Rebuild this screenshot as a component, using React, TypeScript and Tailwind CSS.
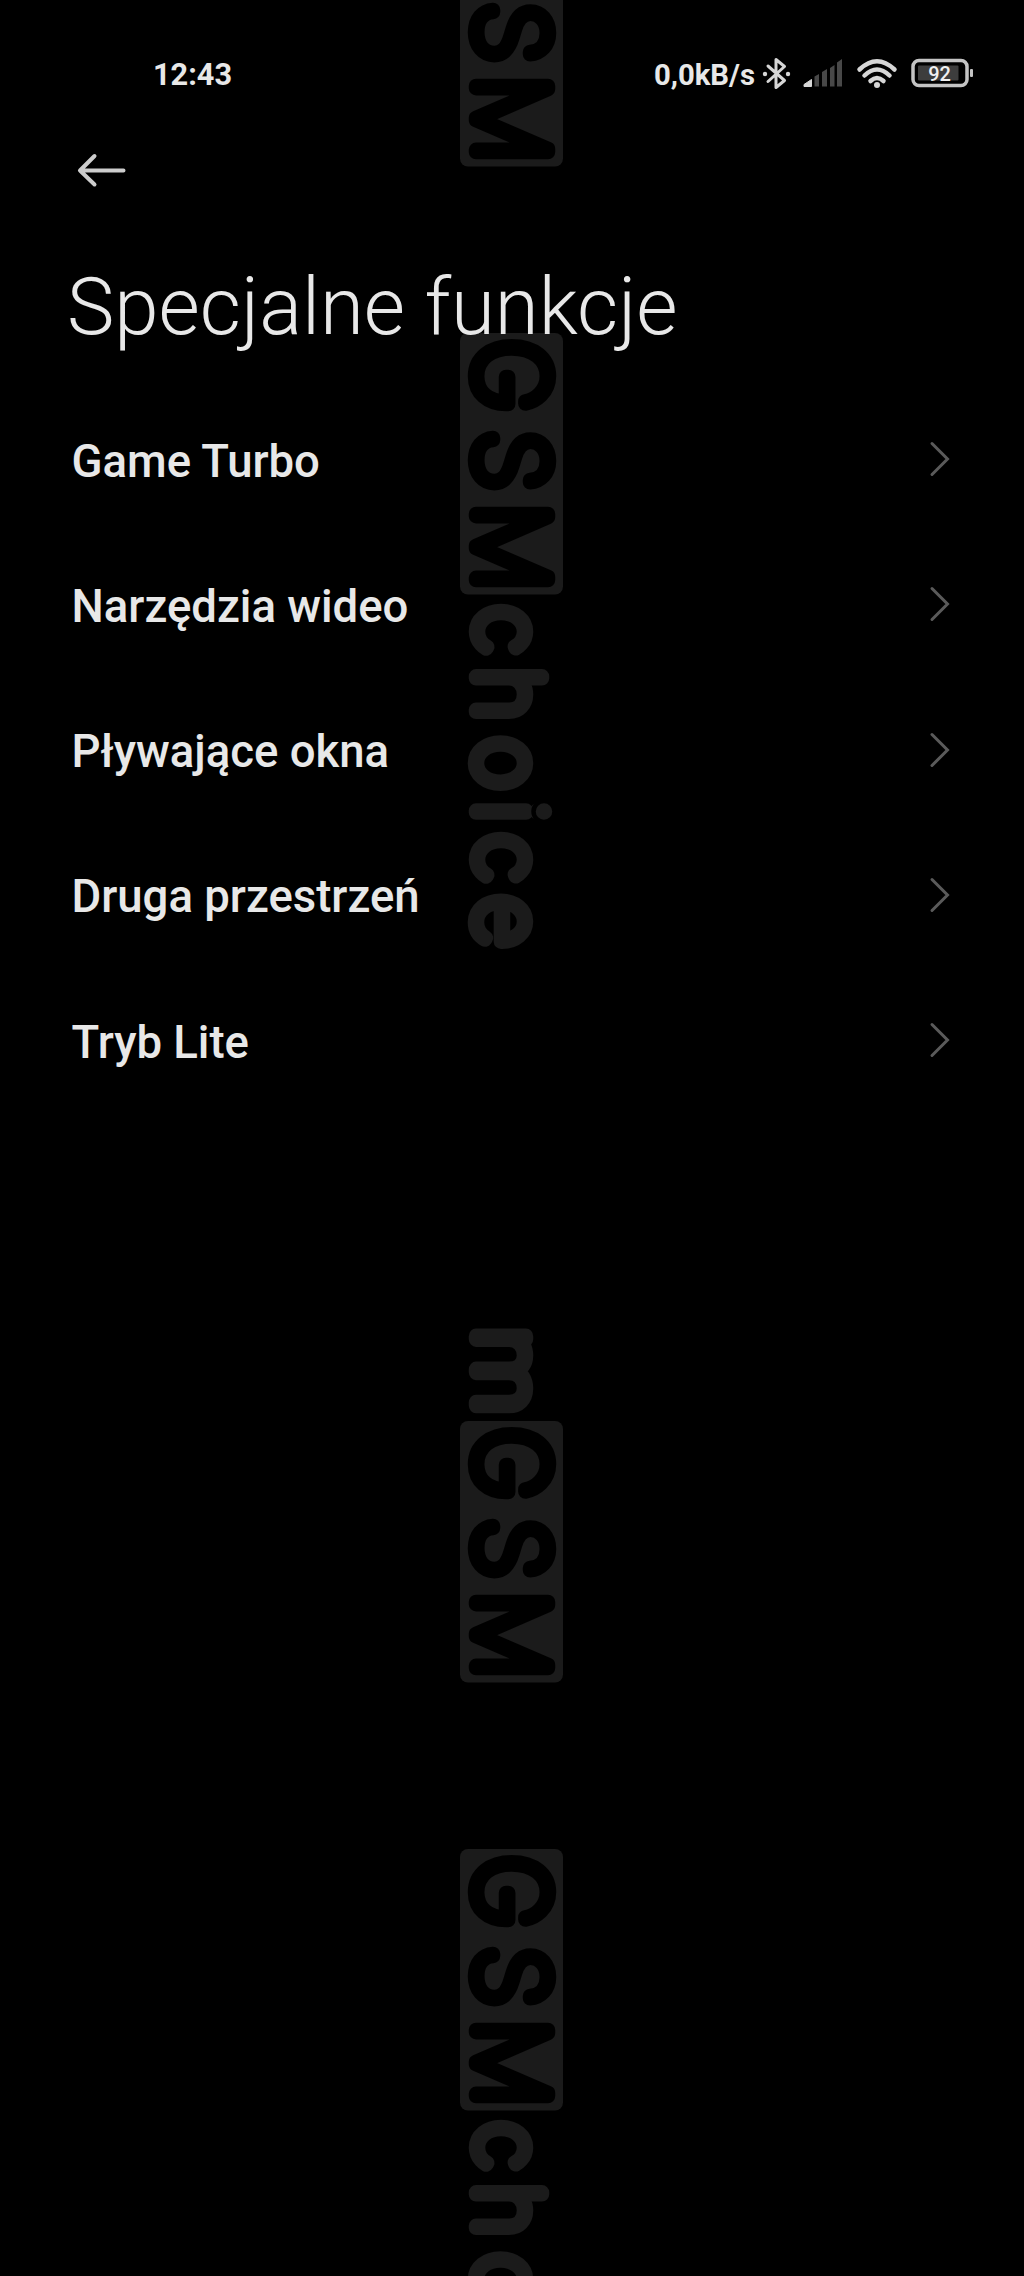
import type { ReactNode } from "react";

const items = [
  { title: "Game Turbo" },
  { title: "Narzędzia wideo" },
  { title: "Pływające okna" },
  { title: "Druga przestrzeń" },
  { title: "Tryb Lite" },
];

// every mark runs top to bottom, y is where its GSM box starts
const marks = [
  { y: -95, before: false, after: false },
  { y: 333, before: false, after: true },
  { y: 1421, before: true, after: false },
  { y: 1849, before: false, after: true },
];

const MarkText = ({ x, size, color, children }: { x: string; size: number; color: string; children: ReactNode }) => (
  <text
    x={x}
    y="0"
    textAnchor="middle"
    fontFamily="Inter, sans-serif"
    fontWeight="100"
    fontSize={size}
    fill={color}
    stroke={color}
    strokeWidth="14.5"
    strokeLinecap="round"
    strokeLinejoin="round"
  >
    {children}
  </text>
);

const Watermark = () => (
  <svg className="absolute inset-0 pointer-events-none" width="1024" height="2276" viewBox="0 0 1024 2276" aria-hidden="true">
    {marks.map((mark) => (
      <g key={mark.y} transform={`translate(476 ${mark.y}) rotate(90)`}>
        {mark.before && (
          <g transform="translate(-50 0) scale(1.12 1)">
            <MarkText x="0" size={91} color="#1b1b1b">m</MarkText>
          </g>
        )}
        <rect x="0" y="-87" width="261.5" height="103" rx="8" fill="#1b1b1b" />
        <MarkText x="42.5 127.5 214" size={99} color="#000000">GSM</MarkText>
        {mark.after && (
          <>
            <MarkText x="296.5 361 430 478.5 524.5 588" size={91} color="#1b1b1b">choice</MarkText>
            {/* dot of the i, the ring keeps it apart from the stem */}
            <circle cx="478.5" cy="-68" r="10.5" fill="#1b1b1b" stroke="#000000" strokeWidth="4.5" />
          </>
        )}
      </g>
    ))}
  </svg>
);

const StatusBar = () => (
  <div className="h-[148px] pt-[57px] pl-[153px] pr-[50px] flex items-start justify-between">
    <span className="text-[30.7px] leading-[36px] font-bold text-[#e8e8e8]">12:43</span>
    <div className="flex items-start">
      <span className="text-[29.3px] leading-[36px] font-bold text-[#e8e8e8]">0,0kB/s</span>
      {/* Bluetooth, signal, wifi, battery */}
      <svg className="-mt-[17px]" width="219" height="70" viewBox="756 40 219 70" fill="none">
        <g stroke="#d6d6d6" strokeWidth="3" strokeLinejoin="round" strokeLinecap="round">
          <path d="M769 66 L785.5 80.5 L777 87.5 V59.5 L785.5 66.5 L769 81.5" />
        </g>
        <circle cx="766" cy="74" r="2.2" fill="#d6d6d6" />
        <circle cx="789" cy="74" r="2.2" fill="#d6d6d6" />
        <path d="M805 86.5 V84.5 L812.5 79.5 V86.5 Z" fill="#d6d6d6" stroke="#d6d6d6" />
        <path d="M815.5 76.5 L820 74 V86.5 H815.5 Z M823 72 L828 69 V86.5 H823 Z M831 68 L835.5 65 V86.5 H831 Z M838 62.5 L843 59 V86.5 H838 Z" fill="#484848" />
        <g stroke="#d6d6d6" strokeWidth="4.5" strokeLinecap="round">
          <path d="M860.5 69.5 Q878 53 895.5 69.5" />
          <path d="M865.5 75.5 Q878 63.5 890.5 75.5" />
          <path d="M871.5 81 Q878 75 884.5 81" />
        </g>
        <circle cx="878" cy="85" r="3" fill="#d6d6d6" />
        <rect x="914" y="60.5" width="54" height="25" rx="6" stroke="#c4c4c4" strokeWidth="3.5" />
        <rect x="919" y="65.5" width="40.5" height="15" rx="1" fill="#3d3d3d" />
        <rect x="971" y="69" width="3" height="8" rx="1" fill="#c4c4c4" />
        <text x="940.5" y="80.5" textAnchor="middle" fontFamily="Roboto, sans-serif" fontWeight="500" fontSize="20" fill="#f0f0f0">92</text>
      </svg>
    </div>
  </div>
);

const App = () => {
  return (
    <main className="relative w-[1024px] h-[2276px] overflow-hidden bg-black font-['Roboto',sans-serif]">
      <Watermark />
      <div className="relative">
        <StatusBar />

        <button className="block ml-[74px] w-14 h-11" aria-label="Wstecz">
          <svg width="56" height="44" viewBox="74 148 56 44" fill="none" stroke="#cdcdcd" strokeWidth="4" strokeLinecap="round" strokeLinejoin="round">
            <path d="M94.5 156 L80 170.5 L94.5 184.5 M80 170.5 H123.5" />
          </svg>
        </button>

        <h1 className="pt-[68px] pl-[67px] text-[79.8px] leading-[94px] font-light text-[#e8e8e8] whitespace-nowrap">
          Specjalne funkcje
        </h1>

        <ul className="mt-[34px]">
          {items.map((item) => (
            <li key={item.title} className="h-[145.25px] pl-[71.5px] pr-[73px] flex items-center justify-between">
              <span className="pt-[2px] text-[45.5px] leading-[54px] font-medium text-[#e8e8e8]">{item.title}</span>
              <svg className="-mt-[3px]" width="22" height="38" viewBox="0 0 22 38" fill="none" stroke="#5a5a5a" strokeWidth="3" strokeLinecap="round">
                <path d="M3 3.5 L18.5 19 L3 34.5" />
              </svg>
            </li>
          ))}
        </ul>
      </div>
    </main>
  );
};

export default App;
